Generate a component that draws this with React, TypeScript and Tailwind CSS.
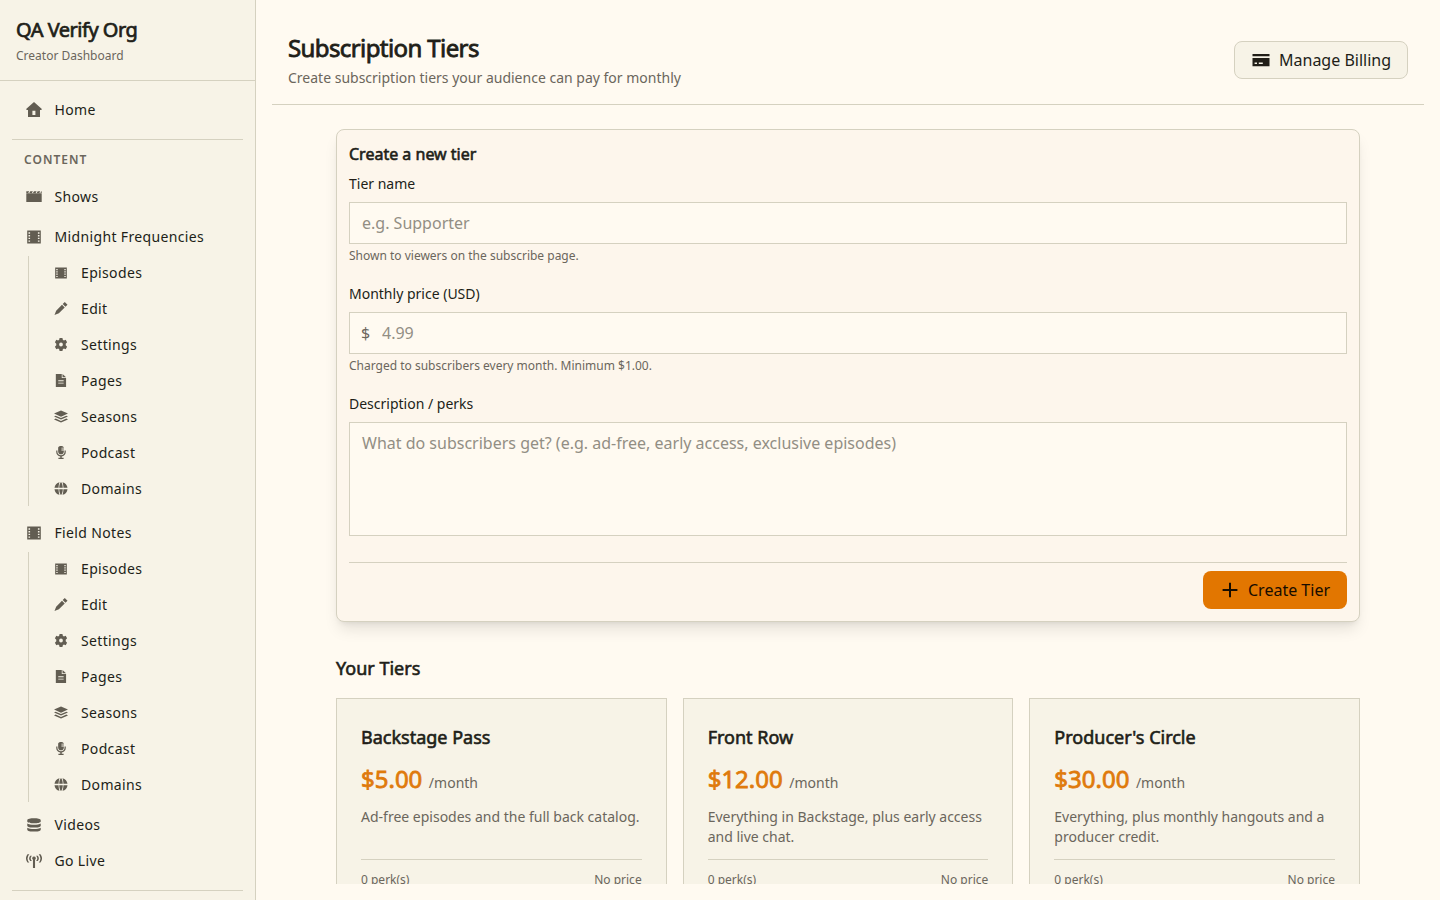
import React from "react";

type IconName =
  | "home" | "shows" | "film" | "edit" | "gear" | "page" | "layers" | "mic" | "globe" | "database" | "tower" | "card" | "plus";

const shapes: Record<IconName, { box: string; d: string }> = {
  home: { box: "0 0 16 15", d: "M8 0L15.6 6.7V8H14V15H2V8H.4V6.7zM6.4 8.7V13H9.4V8.7z" },
  shows: { box: "0 0 16 15", d: "M.3 2.2H3.2L1.9 4.4H.3zM4.3 2.2H6.9L5.6 4.4H3zM8 2.2H10.6L9.3 4.4H6.7zM11.7 2.2H14.3L13 4.4H10.4zM15.3 2.2H15.7V4.4H14.1zM.3 4.3H15.7V13H.3z" },
  film: { box: "0 0 14 14", d: "M.2 .6H13.8V13.4H.2zM1.5 2.3V3.7H3.1V2.3zM1.5 5V6.4H3.1V5zM1.5 7.7V9.1H3.1V7.7zM1.5 10.4V11.8H3.1V10.4zM10.9 2.3V3.7H12.5V2.3zM10.9 5V6.4H12.5V5zM10.9 7.7V9.1H12.5V7.7zM10.9 10.4V11.8H12.5V10.4z" },
  edit: { box: "0 0 512 512", d: "M405 0l107 107-82 82L323 82zM295 110l107 107-230 230L0 512 65 340z" },
  gear: { box: "0 0 512 512", d: "M200 0h112l16 70 42 24 70-22 56 97-54 55v64l54 55-56 97-70-22-42 24-16 70H200l-16-70-42-24-70 22-56-97 54-55v-64l-54-55 56-97 70 22 42-24zM256 182a74 74 0 100 148 74 74 0 000-148z" },
  page: { box: "0 0 408 512", d: "M0 0h234v160h170v352H0zM264 0l140 128H264zM96 248v34h212v-34zM96 340v34h212v-34z" },
  layers: { box: "0 0 576 512", d: "M288 6l288 128-288 128L0 134zM70 220l218 97 218-97 70 36-288 128L0 256zM70 342l218 97 218-97 70 36-288 128L0 378z" },
  mic: { box: "0 0 384 512", d: "M80 64C80-20 304-20 304 64h-96v38h96v36h-96v38h96v36c0 150-224 150-224 0zM4 180h48v52c0 72 60 132 140 132s140-60 140-132v-52h48v52c0 94-70 166-160 178v48h74v54H90v-54h74v-48C74 398 4 326 4 232z" },
  globe: { box: "0 0 512 512", d: "M352 230c-2-91-14-156-36-222 108 26 186 108 196 222zM186 230c3-110 32-190 70-230 38 40 67 120 70 230zM160 230H0C10 116 88 34 196 8c-22 66-34 131-36 222zM160 282c2 91 14 156 36 222C88 478 10 396 0 282zM326 282c-3 110-32 190-70 230-38-40-67-120-70-230zM352 282h160c-10 114-88 196-196 222 22-66 34-131 36-222z" },
  database: { box: "-8 0 528 512", d: "M10 80C10-10 502-10 502 80v48c0 90-492 90-492 0zM10 200c80 62 412 62 492 0v80c0 94-492 94-492 0zM10 352c80 62 412 62 492 0v75c0 94-492 94-492 0z" },
  tower: { box: "0 0 576 512", d: "M50 10h66a230 230 0 000 300H50A250 250 0 0150 10zM526 10h-66a230 230 0 010 300h66a250 250 0 000-300zM150 60h62a150 150 0 000 200h-62a160 160 0 010-200zM426 60h-62a150 150 0 010 200h62a160 160 0 000-200zM288 90a66 66 0 0138 120v302h-76V210a66 66 0 0138-120z" },
  card: { box: "0 0 18 16", d: "M.5 2H17.5V4.3H.5zM.5 6H17.5V14.2H.5zM2.6 10.6V12H5V10.6zM6.8 10.6V12H10.8V10.6z" },
  plus: { box: "0 0 16 16", d: "M7 .7H9V7H15.4V9H9V15.3H7V9H.6V7H7z" },
};

function Icon({ name, className }: { name: IconName; className: string }) {
  return (
    <svg viewBox={shapes[name].box} fill="currentColor" fillRule="evenodd" className={className} aria-hidden="true">
      <path d={shapes[name].d} />
    </svg>
  );
}

function NavItem({ icon, label, tall }: { icon: IconName; label: string; tall?: boolean }) {
  return (
    <a className={`flex ${tall ? "h-10" : "h-9"} items-center pl-3 text-sm tracking-[0.025em]`}>
      <span className="mr-[10.5px] mb-px flex w-5 shrink-0 justify-center text-[#625d52]">
        <Icon name={icon} className={icon === "home" || icon === "shows" ? "h-[15px] w-4" : "h-3.5 w-4"} />
      </span>
      {label}
    </a>
  );
}

const showLinks: { icon: IconName; label: string }[] = [
  { icon: "film", label: "Episodes" },
  { icon: "edit", label: "Edit" },
  { icon: "gear", label: "Settings" },
  { icon: "page", label: "Pages" },
  { icon: "layers", label: "Seasons" },
  { icon: "mic", label: "Podcast" },
  { icon: "globe", label: "Domains" },
];

function ShowLinks() {
  return (
    <div className="ml-4 flex h-[250px] flex-col border-l border-[#d5d1c0]">
      <div className="-mt-px">
        {showLinks.map((l) => (
          <a key={l.label} className="flex h-9 items-center pl-6 text-sm tracking-[0.025em]">
            <span className="mr-[11.5px] mb-px flex w-[16.5px] shrink-0 justify-center text-[#625d52]">
              <Icon name={l.icon} className={l.icon === "film" ? "h-3 w-3" : "h-[13px] w-3.5"} />
            </span>
            {l.label}
          </a>
        ))}
      </div>
    </div>
  );
}

const tiers = [
  { name: "Backstage Pass", price: "$5.00", text: "Ad-free episodes and the full back catalog." },
  { name: "Front Row", price: "$12.00", text: "Everything in Backstage, plus early access and live chat." },
  { name: "Producer's Circle", price: "$30.00", text: "Everything, plus monthly hangouts and a producer credit." },
];

const field =
  "block w-full border border-[#d5d1c0] bg-[#fffaf1] px-3 py-2 text-base leading-6 outline-none placeholder:text-[#928e84]";

export default function App() {
  return (
    <div className="flex h-[900px] w-[1440px] overflow-hidden bg-[#fffaf1] font-['Noto_Sans',sans-serif] text-[#211e18]">
      <aside className="flex w-64 shrink-0 flex-col overflow-hidden border-r border-[#d5d1c0] bg-[#f7f3e7]">
        <header className="h-[81px] shrink-0 border-b border-[#d5d1c0] px-4 pt-4">
          <h1 className="text-xl leading-7 tracking-[-0.025em] [-webkit-text-stroke:0.7px_currentColor]">QA Verify Org</h1>
          <p className="mt-1 text-xs text-[#6b665c]">Creator Dashboard</p>
        </header>
        <nav className="flex shrink-0 flex-col px-3 pt-[11px]">
          <NavItem icon="home" label="Home" />
          <hr className="mt-[11px] border-[#d5d1c0]" />
          <h2 className="mt-3 mb-[9px] pl-3 text-xs font-semibold tracking-[0.085em] text-[#6b665c]">CONTENT</h2>
          <NavItem icon="shows" label="Shows" tall />
          <NavItem icon="film" label="Midnight Frequencies" tall />
          <div className="-mt-px"><ShowLinks /></div>
          <div className="mt-[7px]"><NavItem icon="film" label="Field Notes" tall /></div>
          <div className="-mt-px"><ShowLinks /></div>
          <div className="mt-[5px]"><NavItem icon="database" label="Videos" /></div>
          <NavItem icon="tower" label="Go Live" />
          <hr className="mt-[11px] border-[#d5d1c0]" />
        </nav>
      </aside>

      <main className="min-w-0 flex-1 p-4">
        <div className="h-[868px] overflow-hidden">
          <header className="flex h-[89px] items-center justify-between border-b border-[#d5d1c0] px-4">
            <div>
              <h1 className="text-2xl leading-8 tracking-[-0.025em] [-webkit-text-stroke:0.8px_currentColor]">Subscription Tiers</h1>
              <p className="mt-1 text-sm text-[#6b665c]">Create subscription tiers your audience can pay for monthly</p>
            </div>
            <button className="flex h-[38px] w-[174px] items-center rounded-lg border border-[#d5d1c0] bg-[#f7f3e7] pl-[17px] text-base">
              <Icon name="card" className="mr-[9px] h-4 w-[18px]" />
              Manage Billing
            </button>
          </header>

          <div className="mx-auto mt-6 w-[1024px]">
            <section className="h-[493px] rounded-lg border border-[#d5d1c0] bg-[#fdf6ec] p-3 shadow-lg">
              <h2 className="text-base leading-6 [-webkit-text-stroke:0.6px_currentColor]">Create a new tier</h2>
              <label className="mt-2 block text-sm">Tier name</label>
              <input className={`${field} mt-2 h-[42px]`} placeholder="e.g. Supporter" />
              <p className="mt-1 text-xs text-[#6b665c]">Shown to viewers on the subscribe page.</p>
              <label className="mt-5 block text-sm">Monthly price (USD)</label>
              <div className="mt-2 flex h-[42px] items-center border border-[#d5d1c0] bg-[#fffaf1] pl-[11px]">
                <span className="w-[21px] text-base text-[#6b665c]">$</span>
                <input className="min-w-0 flex-1 bg-transparent text-base outline-none placeholder:text-[#928e84]" placeholder="4.99" />
              </div>
              <p className="mt-1 text-xs text-[#6b665c]">Charged to subscribers every month. Minimum $1.00.</p>
              <label className="mt-5 block text-sm">Description / perks</label>
              <textarea className={`${field} mt-2 h-[114px] resize-none`} placeholder="What do subscribers get? (e.g. ad-free, early access, exclusive episodes)" />
              <div className="mt-[26px] flex justify-end border-t border-[#d5d1c0] pt-2">
                <button className="flex h-[38px] w-36 items-center rounded-lg bg-[#e27600] pl-[19px] text-base text-[#160c00]">
                  <Icon name="plus" className="mr-2.5 h-4 w-4" />
                  Create Tier
                </button>
              </div>
            </section>

            <h2 className="mt-8 text-lg leading-7 [-webkit-text-stroke:0.6px_currentColor]">Your Tiers</h2>
            <div className="mt-4 grid grid-cols-3 gap-4">
              {tiers.map((t) => (
                <article key={t.name} className="border border-[#d5d1c0] bg-[#f7f3e7] p-6 pb-10">
                  <h3 className="text-lg leading-7 [-webkit-text-stroke:0.6px_currentColor]">{t.name}</h3>
                  <div className="mt-3 flex items-baseline gap-[6.5px]">
                    <span className="text-2xl leading-8 text-[#df7a0c] [-webkit-text-stroke:0.8px_currentColor]">{t.price}</span>
                    <span className="text-sm text-[#6b665c]">/month</span>
                  </div>
                  <p className="mt-3 h-10 text-sm text-[#6b665c]">{t.text}</p>
                  <div className="mt-3 flex justify-between border-t border-[#d5d1c0] pt-3 text-xs text-[#6b665c]">
                    <span>0 perk(s)</span>
                    <span>No price</span>
                  </div>
                </article>
              ))}
            </div>
          </div>
        </div>
      </main>
    </div>
  );
}
